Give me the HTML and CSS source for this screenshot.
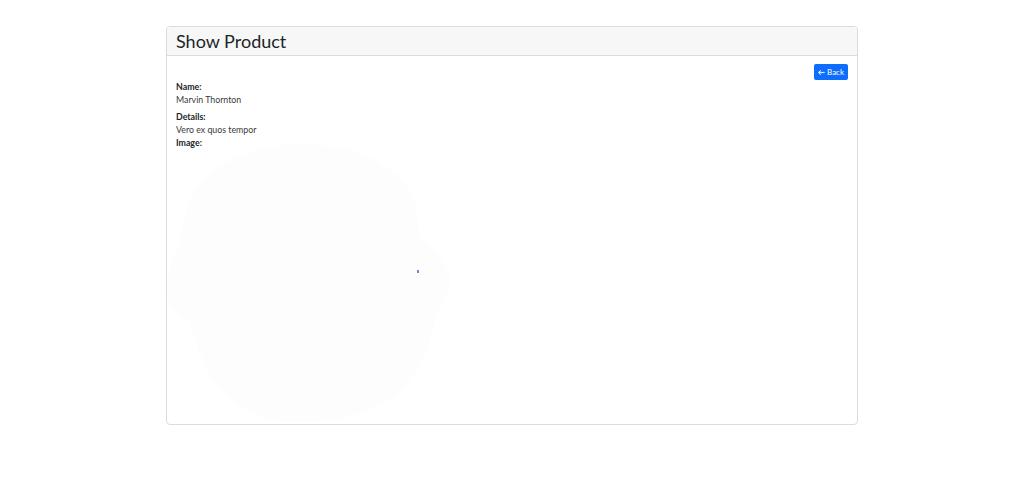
FILE: index.html
```html
<!DOCTYPE html>
<html>
<head>
<meta charset="utf-8">
<link rel="stylesheet" href="styles.css">
</head>
<body>
<div class="container">
  <div class="card">
    <div class="card-header"><h2 class="title">Show Product</h2></div>
    <div class="card-body">
      <div class="actions"><a class="btn" href="#"><svg class="arrow" viewBox="0 0 16 16" width="7" height="7"><path d="M15 8a.5.5 0 0 0-.5-.5H2.7l3.2-3.1a.5.5 0 1 0-.8-.8l-4 4a.5.5 0 0 0 0 .8l4 4a.5.5 0 0 0 .8-.8L2.7 8.5h11.8A.5.5 0 0 0 15 8z" fill="#fff" stroke="#fff" stroke-width="1.2"/></svg>Back</a></div>
      <div class="group"><strong class="label">Name:</strong><div class="value">Marvin Thornton</div></div>
      <div class="group tight"><strong class="label">Details:</strong><div class="value">Vero ex quos tempor</div></div>
      <div class="group image-group"><strong class="label">Image:</strong>
        <svg class="blob" width="290" height="278" viewBox="0 0 290 278">
          <path d="M133 0 C165 0 195 6 215 20 C235 34 247 48 249 60 C251 75 251 88 256 97 C270 110 283 122 283 137 C283 150 276 160 270 170 C265 195 255 225 233 247 C210 267 170 279 133 279 C100 279 80 270 63 254 C40 235 28 200 23 177 C15 172 0 165 0 150 C0 130 5 115 13 100 C15 75 22 50 40 32 C62 12 100 0 133 0 Z" fill="#fdfdfd"/>
          <rect x="250" y="126" width="2" height="3" fill="#6b8fc7"/>
        </svg>
      </div>
    </div>
  </div>
</div>
</body>
</html>
```
FILE: styles.css
```css
html, body { margin: 0; padding: 0; background: #fff; }
body { font-family: Lato, "Noto Sans", sans-serif; color: #212529; }
.container { width: 692px; margin: 26px auto 0; }
.card { border: 1px solid #dcdcdc; border-radius: 4px; overflow: hidden; }
.card-header { background: #f7f7f7; border-bottom: 1px solid #dcdcdc; height: 28px; padding: 0 9px; display: flex; align-items: center; }
.title { margin: 0; font-size: 18px; font-weight: 400; color: #212529; }
.card-body { padding: 8px 9px 2px; }
.actions { display: flex; justify-content: flex-end; }
.btn { display: flex; align-items: center; gap: 2px; background: #0d6efd; color: #fff; text-decoration: none; font-size: 8px; height: 16px; padding: 0 4px; border-radius: 2px; }
.group { font-size: 8.8px; line-height: 13px; margin-bottom: 4px; }
.group.tight { margin-bottom: 0; }
.group .label { font-weight: 700; display: block; }
.value { color: #3a3a3a; }
.image-group { margin-bottom: 0; }
.blob { display: block; margin-left: -9px; margin-top: -5px; }
```
